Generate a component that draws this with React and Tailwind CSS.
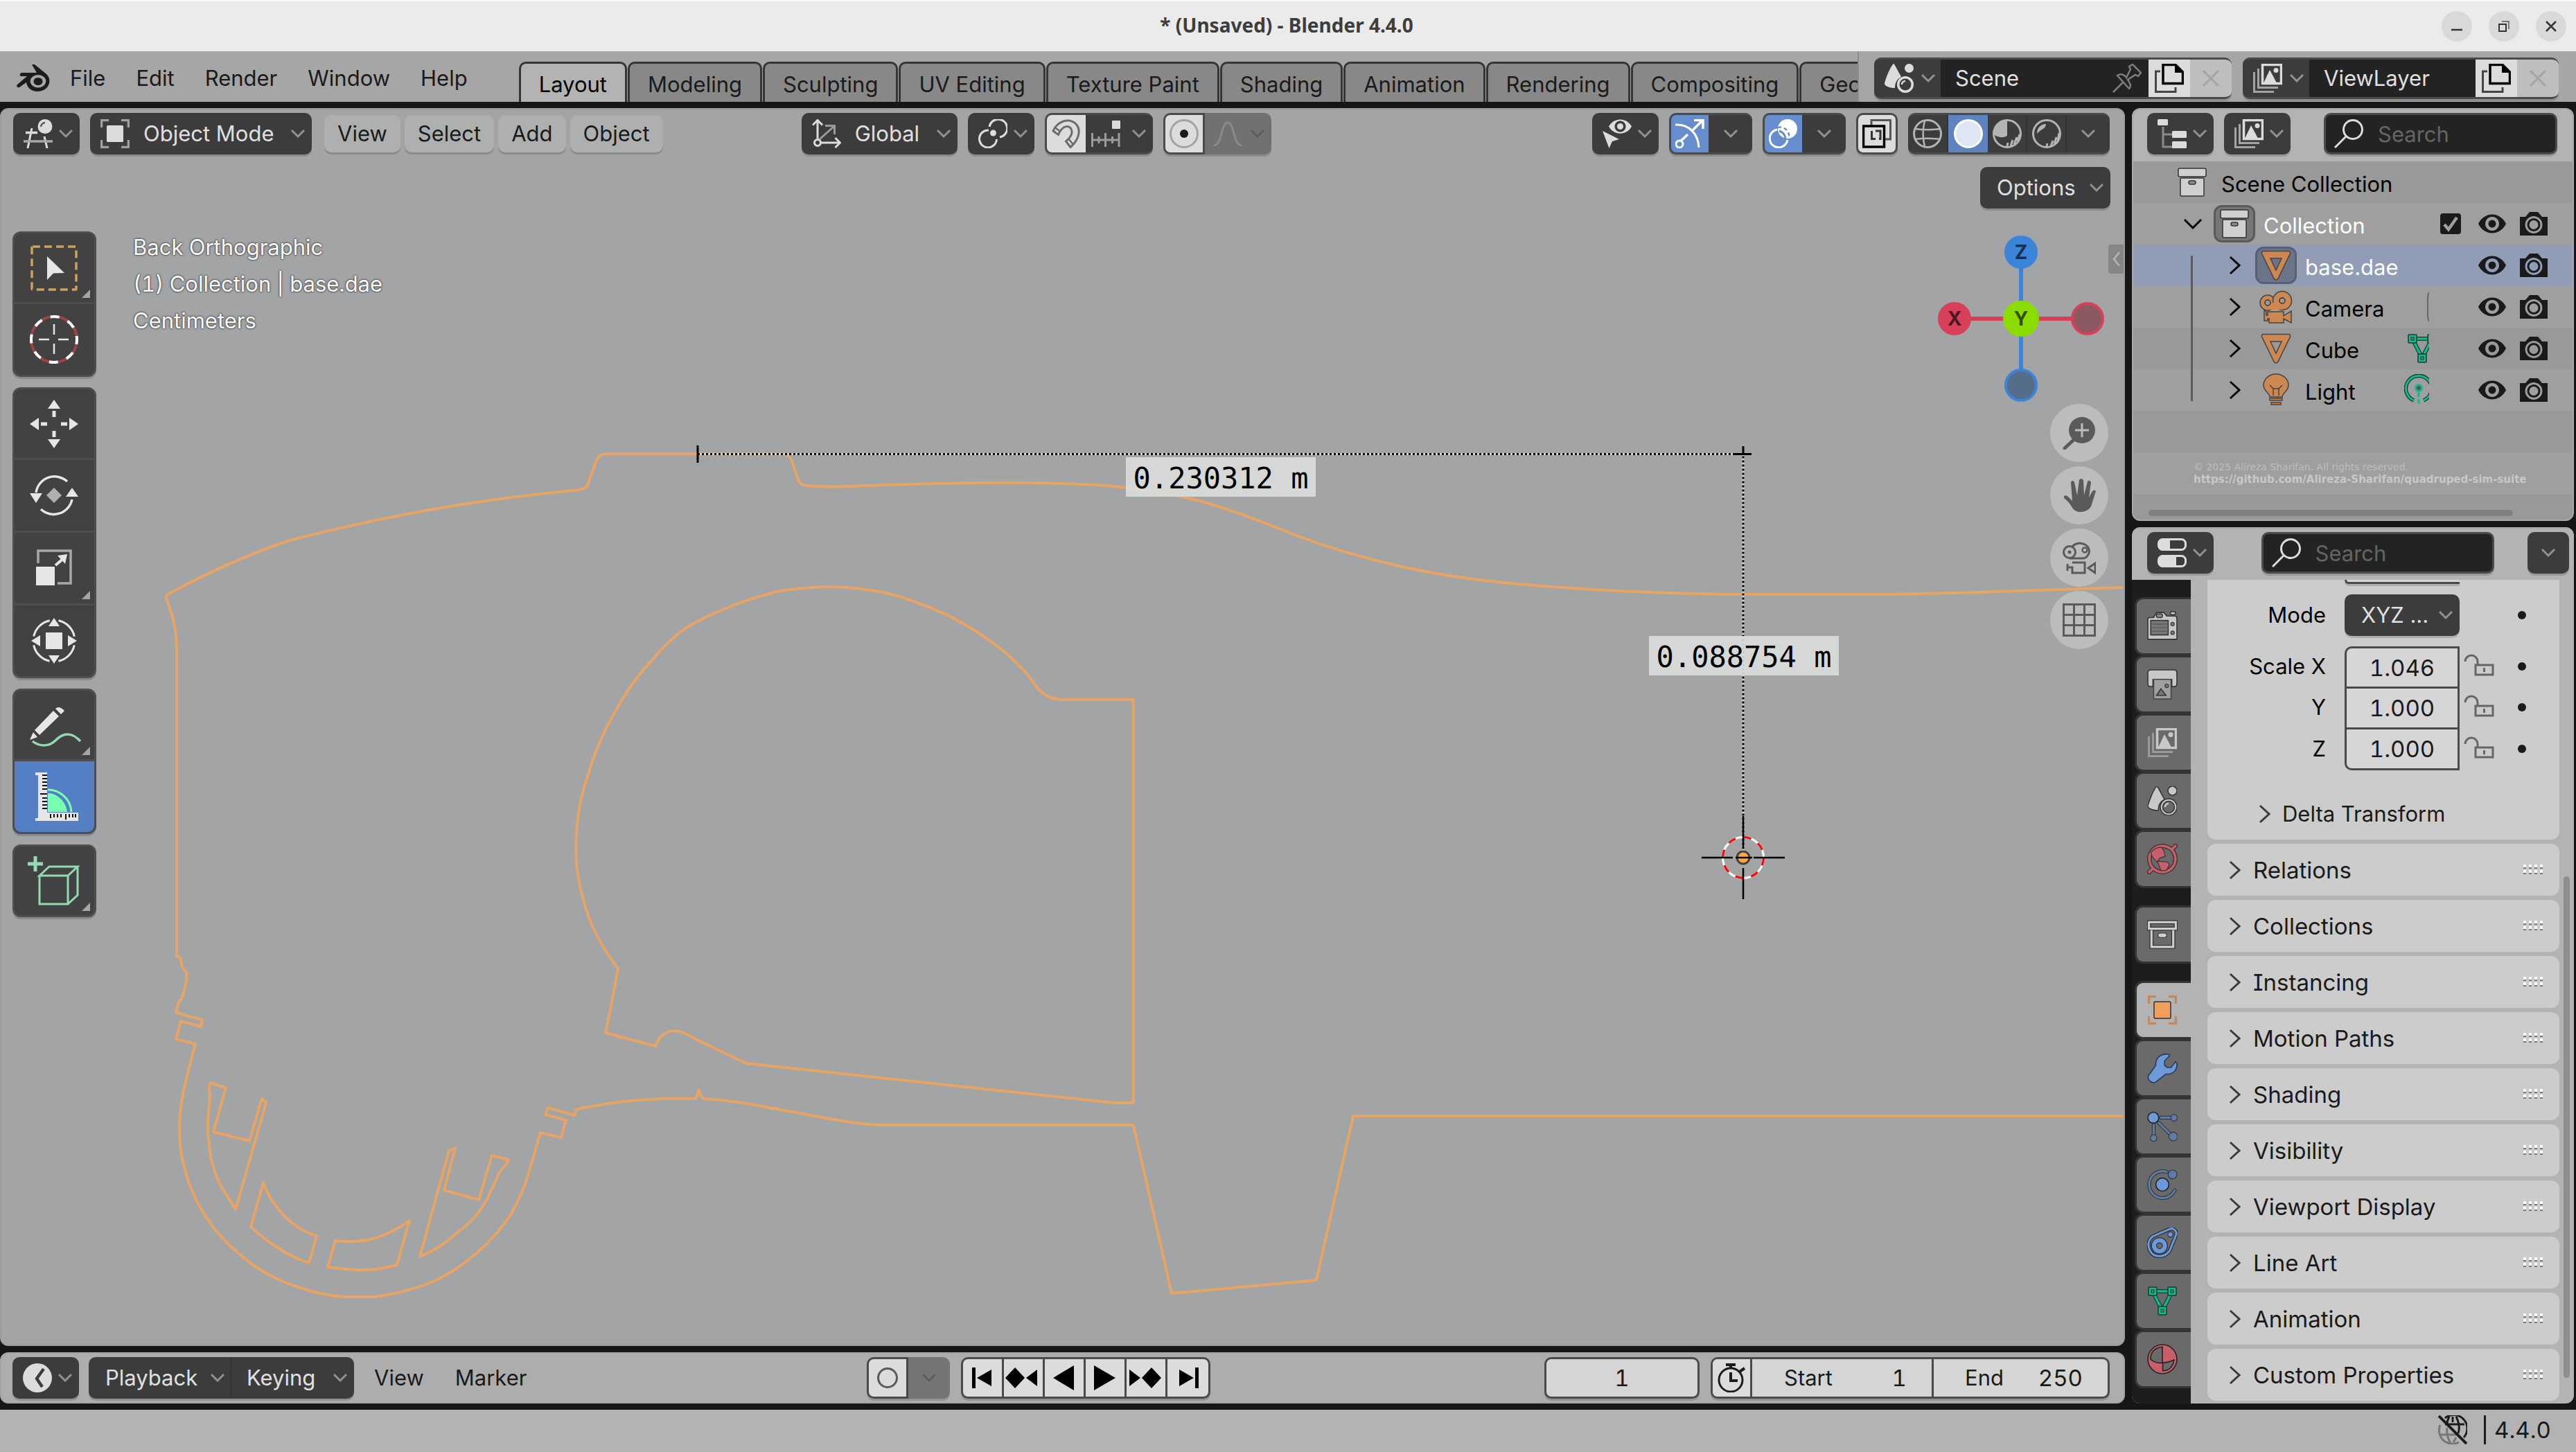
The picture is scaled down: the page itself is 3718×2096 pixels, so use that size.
import React from "react";

const L = "#dcdcdc";

/* ---------- small drawing helpers ---------- */

function Ico({ s = 42, w, h, vb = "0 0 42 42", className = "", children }) {
  return (
    <svg width={w || s} height={h || s} viewBox={vb} fill="none" aria-hidden="true" className={"block shrink-0 " + className}>
      {children}
    </svg>
  );
}

function Chevron({ color = "#929292" }) {
  return (
    <Ico w={20} h={14} vb="0 0 20 14">
      <path d="M1 2 L10 11 L19 2" stroke={color} strokeWidth="3" />
    </Ico>
  );
}

function Right({ color = "#3c3c3c", w = 3 }) {
  return (
    <Ico w={17} h={28} vb="0 0 17 28">
      <path d="M2 2 L15 14 L2 26" stroke={color} strokeWidth={w} />
    </Ico>
  );
}

const BlenderLogo = () => (
  <Ico w={48} h={40} vb="0 0 48 40">
    <path
      fillRule="evenodd"
      fill="#1c1c1c"
      d="M23 2c-1.500-1.500 1-3.500 3-2L43 14c4 4 5 8 4 13-2 8-9 12-17 12-9 0-15-6-16-13L4 33c-3 1-5-2-3-4l14-12H7c-3 0-3-4 0-5h22zM31 15a11 9 0 1 0 0 18.500a11 9 0 1 0 0-18.500zM31 19a6.500 5.500 0 1 1 0 11a6.500 5.500 0 1 1 0-11z"
    />
  </Ico>
);

const View3d = () => (
  <Ico>
    <path d="M12 13 L6 42 M30 25 L34 42" stroke={L} strokeWidth="3" />
    <path d="M3 19.500 H20" stroke={L} strokeWidth="3.500" />
    <path d="M0 32 H42" stroke="#a8a8a8" strokeWidth="3.500" />
    <circle cx="31" cy="10.500" r="10.500" fill={L} />
    <path d="M25 11 a6.500 6.500 0 0 1 6-6" stroke="#555" strokeWidth="2.500" />
  </Ico>
);

const ObjectMode = ({ c = "#a0a0a0", f = L, line = "none" }) => (
  <Ico>
    <path d="M1.500 12 V1.500 H12 M30 1.500 H40.500 V12 M40.500 30 V40.500 H30 M12 40.500 H1.500 V30" stroke={c} strokeWidth="3.500" />
    <rect x="9" y="9" width="24" height="24" rx="1.500" fill={f} stroke={line} strokeWidth="1.500" />
  </Ico>
);

const Axes = () => (
  <Ico>
    <path d="M11 29 L31 11 M19 9.500 H32.500 V22" stroke="#9a9a9a" strokeWidth="3" />
    <path d="M8 2 V28 M1 8.500 L8 1.500 L15 8.500 M13 34 H40 M33.500 27 L40.500 34 L33.500 41" stroke={L} strokeWidth="3" />
    <circle cx="8" cy="34" r="4.500" stroke={L} strokeWidth="3" />
  </Ico>
);

const Pivot = () => (
  <Ico>
    <path d="M16 11 A13 13 0 1 1 31 26" stroke={L} strokeWidth="3" />
    <path d="M15 16 A12.500 12.500 0 1 0 26.500 29" stroke={L} strokeWidth="3" />
    <circle cx="21.500" cy="20" r="4.500" fill={L} />
  </Ico>
);

const Magnet = () => (
  <Ico>
    <path d="M2 17 C8 3 25 -3 35 7 C43 16 39 30 27 40.500 L20.500 32 C30 24 31 17 26.500 12 C21 8 14 12 9.500 22.500 Z" stroke="#6c6c6c" strokeWidth="3" />
    <path d="M4.500 12 L12.500 18 M24 28 L30.500 36" stroke="#6c6c6c" strokeWidth="2.500" />
  </Ico>
);

const Increment = () => (
  <Ico>
    <rect x="30" y="2" width="12" height="12" rx="1" fill={L} />
    <path d="M1.500 20 V40 M40 20 V40 M20.500 20 V40" stroke="#9c9c9c" strokeWidth="3" />
    <path d="M1 30 H41 M11 25 V35 M30.500 25 V35" stroke="#9c9c9c" strokeWidth="3" />
  </Ico>
);

const Proportional = () => (
  <Ico>
    <circle cx="21" cy="21" r="19.500" stroke="#a2a2a2" strokeWidth="3" />
    <circle cx="21" cy="21" r="6" fill="#1a1a1a" />
  </Ico>
);

const Falloff = () => (
  <Ico>
    <path d="M1 38 C14 36 11 5 21 5 C31 5 28 36 41 38" stroke="#8a8a8a" strokeWidth="3" />
  </Ico>
);

const EyeCursor = () => (
  <Ico>
    <path fillRule="evenodd" fill={L} d="M9 10.500 C16 -3 35 -3 42 10.500 C35 24 16 24 9 10.500 Z M25.500 2.500 a8 8 0 1 0 .01 0z" />
    <circle cx="25.500" cy="10.500" r="4.500" fill={L} />
    <path d="M0 17 L24 29 L14 32 L9.500 42 Z" fill={L} />
  </Ico>
);

const GizmoIcon = () => (
  <Ico>
    <path d="M0 8 C20 7 33 21 34 41" stroke="#fff" strokeWidth="3" />
    <path d="M8.500 31 L18 22 M24 17 L38 3 M27 1.500 H40 V14" stroke="#fff" strokeWidth="3.500" />
    <circle cx="6" cy="36" r="5" stroke="#fff" strokeWidth="3" />
  </Ico>
);

const Overlay = () => (
  <Ico>
    <circle cx="27" cy="14" r="14" fill="#fff" />
    <path d="M12 15 A13 13 0 1 0 27 30" stroke="#fff" strokeWidth="3" />
    <path d="M15 17 A13 13 0 0 1 24 28" stroke="#668dcd" strokeWidth="3" />
    <path d="M13 12 A13 13 0 0 1 28 30" stroke="#668dcd" strokeWidth="2.500" strokeDasharray="5 4" />
  </Ico>
);

const Xray = () => (
  <Ico>
    <path d="M13 9 V1.500 H40.500 V29 H33" stroke="#555" strokeWidth="3" />
    <rect x="1.500" y="10" width="30" height="30" stroke="#000" strokeWidth="3.500" />
    <path d="M13.500 17 V28.500 H19 M24 28.500 H26 V17 H19" stroke="#333" strokeWidth="3" />
  </Ico>
);

const Wire = () => (
  <Ico>
    <circle cx="21" cy="21" r="19.500" stroke="#b4b4b4" strokeWidth="3" />
    <path d="M3 14 C14 15.500 28 15.500 39 14 M3 29 C14 27.500 28 27.500 39 29 M17 2 C14 14 14 28 17 40" stroke="#b4b4b4" strokeWidth="2.500" />
  </Ico>
);

const Solid = () => (
  <Ico>
    <circle cx="21" cy="21" r="19.500" fill="#dfe6f3" stroke="#fff" strokeWidth="3" />
  </Ico>
);

const MaterialShade = () => (
  <Ico>
    <circle cx="21" cy="21" r="19.500" stroke="#b4b4b4" strokeWidth="3" />
    <path d="M21 2 V24 C14 28 6 26 2 22 A19 19 0 0 1 21 2Z" fill="#b4b4b4" />
    <path d="M21 39 L22 34 M26 39 L29 30 M31 36 L35 26 M36 32 L39 22" stroke="#b4b4b4" strokeWidth="3" />
  </Ico>
);

const Rendered = () => (
  <Ico>
    <circle cx="21" cy="21" r="19.500" stroke="#b4b4b4" strokeWidth="3" />
    <path d="M7 21 C7 12 13 7 20 7 C20 14 13 14 7 21Z" fill="#b4b4b4" />
    <path d="M21 39 L22 35 M27 39 L30 31 M32 36 L35 26 M37 31 L39 20" stroke="#b4b4b4" strokeWidth="3" />
  </Ico>
);

const SceneIcon = ({ c = L, bg = "#3c3c3c", line = "none" }) => (
  <Ico>
    <path d="M13 0 C14 0 15 2 23 17 L24 19 C18 22 15 27 15 35 C9 35 1 33 0 29 C0 26 8 4 13 0Z" fill={c} stroke={line} strokeWidth="1.500" />
    <circle cx="35.500" cy="6.500" r="6.500" fill={c} stroke={line} strokeWidth="1.500" />
    <circle cx="30" cy="30" r="12" fill={c} stroke={line} strokeWidth="1.500" />
    <circle cx="30" cy="30" r="8.500" fill={bg} stroke={line} strokeWidth="1.500" />
    <path d="M25 30 a5 5 0 0 1 5-5" stroke={c} strokeWidth="2.500" />
  </Ico>
);

const Layers = ({ c = L, d = "#a4a4a4", bg = "#3c3c3c" }) => (
  <Ico>
    <path d="M1.500 12 V40.500 H30 M7.500 7 V34.500 H36" stroke={d} strokeWidth="3" />
    <rect x="13.500" y="1.500" width="27" height="27" fill={bg} stroke={c} strokeWidth="3.500" />
    <path d="M15 28 L24 9 L30 20 L34 28Z" fill={c} />
    <circle cx="33" cy="9.500" r="3.500" fill={c} />
  </Ico>
);

const Copy = () => (
  <Ico>
    <path d="M8 11 H1.500 V40.500 H30 V34" stroke="#444" strokeWidth="3" />
    <path d="M12 1.500 H30 L40.500 12 V28.500 H12 Z" stroke="#000" strokeWidth="3.500" />
    <path d="M29 0 L42 13 H29Z" fill="#000" />
  </Ico>
);

const Cross = () => (
  <Ico s={26} vb="0 0 26 26">
    <path d="M2 2 L24 24 M24 2 L2 24" stroke="#a4a4a4" strokeWidth="3" />
  </Ico>
);

const Pin = () => (
  <Ico>
    <path d="M1 41 L15 27 M7 17 C13 13 18 17 20 20 L26 8 L24 4 L29 1 L41 13 L37 18 L33 16 L22 23 C25 28 28 32 24 36 Z" stroke="#7c7c7c" strokeWidth="2.500" />
  </Ico>
);

const Tree = () => (
  <Ico>
    <path d="M8 11 V40 H22 M8 22 H22" stroke="#8a8a8a" strokeWidth="3" />
    <rect x="0" y="0" width="15" height="9" rx="1.500" fill={L} />
    <rect x="21" y="17" width="21" height="10" rx="1.500" fill={L} />
    <rect x="21" y="32" width="21" height="10" rx="1.500" fill={L} />
  </Ico>
);

const SearchIcon = () => (
  <Ico>
    <circle cx="27" cy="15" r="13.500" stroke={L} strokeWidth="3" />
    <path d="M17 25 L1 41" stroke={L} strokeWidth="3" />
  </Ico>
);

const PropsIcon = () => (
  <Ico>
    <rect x="1.500" y="1.500" width="39" height="15" rx="6" stroke={L} strokeWidth="3" />
    <path d="M18 1 V17 H8 a7 7 0 0 1-7-7 V8 a7 7 0 0 1 7-7Z" fill={L} />
    <rect x="1.500" y="25.500" width="39" height="15" rx="6" stroke={L} strokeWidth="3" />
    <path d="M27 25 V41 H8 a7 7 0 0 1-7-7 V32 a7 7 0 0 1 7-7Z" fill={L} />
  </Ico>
);

const ClockIcon = () => (
  <Ico>
    <circle cx="21" cy="21" r="21" fill={L} />
    <path d="M30 8 L20 22 L28 34" stroke="#3c3c3c" strokeWidth="4.500" />
  </Ico>
);

const Stopwatch = () => (
  <Ico>
    <circle cx="20" cy="24" r="17" stroke="#1c1c1c" strokeWidth="3" />
    <path d="M13 2 H27 M20 2 V7 M33 12 L40 7 M20 13 V25 H30" stroke="#1c1c1c" strokeWidth="4" />
  </Ico>
);

const Box = ({ c = "#d0d0d0" }) => (
  <Ico>
    <rect x="1" y="1" width="40" height="12" rx="2" fill={c} stroke="#333" strokeWidth="1.500" />
    <rect x="4" y="15" width="34" height="26" rx="1.500" fill={c} stroke="#333" strokeWidth="1.500" />
    <rect x="16" y="19" width="10" height="5" rx="2.500" fill="#8c8c8c" stroke="#333" strokeWidth="1.500" />
  </Ico>
);

const MeshTri = () => (
  <Ico s={44} vb="0 0 44 44">
    <path fillRule="evenodd" d="M3 1.500 H41 Q43 2 42.500 5 L25 41 Q22 45 19 41 L1.500 5 Q1 2 3 1.500Z M14 12 L22 29 L30 12Z" fill="#cc8850" stroke="#444" strokeWidth="1.500" />
  </Ico>
);

const CameraObj = () => (
  <Ico w={48} h={48} vb="0 0 48 48">
    <path d="M7 27 V44 H12 V41 H14 V47 H35 V41 L46 47 V30 L35 37 V31 H12 V36 H10 V31Z" fill="#cc8850" stroke="#444" strokeWidth="1.500" />
    <circle cx="12" cy="18" r="11" fill="#cc8850" stroke="#444" strokeWidth="1.500" />
    <circle cx="33" cy="15" r="13.500" fill="#cc8850" stroke="#444" strokeWidth="1.500" />
    <path d="M12 18 H33 V28 H12Z" fill="#cc8850" />
    <circle cx="12" cy="18" r="4" fill="#9a9a9a" stroke="#333" strokeWidth="1.500" />
    <circle cx="33" cy="15" r="4" fill="#9a9a9a" stroke="#333" strokeWidth="1.500" />
  </Ico>
);

const LightObj = () => (
  <Ico w={44} h={48} vb="0 0 44 48">
    <path d="M22 1 C11 1 4 9 4 17 C4 26 13 28 13 34 H31 C31 28 40 26 40 17 C40 9 33 1 22 1Z" fill="#cc8850" stroke="#444" strokeWidth="1.500" />
    <path d="M13 17 L18 22 H26 L31 17 M18 22 V32 M26 22 V32" stroke="#444" strokeWidth="1.500" />
    <path d="M13 36 H31 V39 H13Z M15 42 H29 V45 H15Z" fill="#cc8850" stroke="#444" strokeWidth="1.500" />
  </Ico>
);

const MeshData = () => (
  <Ico>
    <path d="M7 7 H35 L21 35Z" stroke="#1c3a30" strokeWidth="6" />
    <path d="M7 7 H35 L21 35Z" stroke="#0fb98a" strokeWidth="3.500" />
    {[[1, 1], [29, 1], [15, 29]].map(([x, y]) => (
      <g key={x}>
        <rect x={x} y={y} width="12" height="12" rx="1" fill="#0fb98a" stroke="#1c3a30" strokeWidth="1.500" />
        <rect x={x + 4} y={y + 4} width="4" height="4" fill="#777" stroke="#1c3a30" strokeWidth="1" />
      </g>
    ))}
  </Ico>
);

const LightData = () => (
  <Ico w={42} h={46} vb="0 0 42 46">
    <path d="M14 38 A18.500 18.500 0 1 1 28 38" stroke="#1c3a30" strokeWidth="5.500" />
    <path d="M14 38 A18.500 18.500 0 1 1 28 38" stroke="#0fb98a" strokeWidth="3" />
    <circle cx="21" cy="20" r="4.500" fill="#555" stroke="#0fb98a" strokeWidth="3" />
    <path d="M21 26 V46" stroke="#0fb98a" strokeWidth="3" strokeDasharray="7 3" />
  </Ico>
);

const Eye = () => (
  <Ico w={40} h={28} vb="0 0 40 28">
    <path fillRule="evenodd" fill="#1a1a1a" d="M0 14 C9 -4 31 -4 40 14 C31 32 9 32 0 14Z M20 4 a10 10 0 1 0 .01 0z" />
    <circle cx="20" cy="14" r="5.500" fill="#1a1a1a" />
  </Ico>
);

const Cam = () => (
  <Ico w={40} h={34} vb="0 0 40 34">
    <path fillRule="evenodd" fill="#1a1a1a" d="M0 7 H8 L14 0 H26 L32 7 H40 V34 H0Z M20 6 a12.500 12.500 0 1 0 .01 0z" />
    <circle cx="20" cy="18.500" r="8" stroke="#1a1a1a" strokeWidth="3" />
  </Ico>
);

const Lock = () => (
  <Ico w={44} h={34} vb="0 0 44 34">
    <path d="M2 12 a9 9 0 0 1 18 0 V17" stroke="#666" strokeWidth="3" />
    <rect x="17" y="17" width="25" height="14" stroke="#666" strokeWidth="3" />
    <rect x="28" y="21" width="3" height="6" fill="#666" />
  </Ico>
);

const Grip = () => (
  <Ico w={30} h={16} vb="0 0 30 16">
    {[0, 8, 16, 24].map((x) => (
      <g key={x}>
        <rect x={x} y="0" width="4" height="4" fill="#fff" />
        <rect x={x} y="4" width="4" height="2" fill="#777" />
        <rect x={x} y="8" width="4" height="4" fill="#fff" />
        <rect x={x} y="12" width="4" height="2" fill="#777" />
      </g>
    ))}
  </Ico>
);

/* ---------- properties tab icons ---------- */

const TabRender = () => (
  <Ico s={44}>
    <path d="M2 9 H9 L13 2 H23 L27 7 H38 Q41 7 41 10 V39 H1 V11Z" fill="#c8c8c8" stroke="#333" strokeWidth="1.500" />
    <rect x="32" y="1" width="7" height="4" rx="1.500" fill="#c8c8c8" stroke="#333" strokeWidth="1.500" />
    <rect x="13" y="4" width="8" height="5" rx="1.500" fill="#888" stroke="#333" strokeWidth="1.500" />
    <rect x="5" y="13" width="24" height="20" fill="#777" stroke="#333" strokeWidth="1.500" />
    <path d="M7 18 H27 M7 23 H27 M7 28 H27" stroke="#555" strokeWidth="1" />
    <circle cx="35" cy="18" r="2.500" fill="#777" stroke="#333" />
    <circle cx="35" cy="30" r="2.500" fill="#777" stroke="#333" />
  </Ico>
);
const TabOutput = () => (
  <Ico s={44}>
    <path d="M5 1 H37 Q41 1 41 5 V20 Q41 24 37 24 H34 V14 H8 V24 H5 Q1 24 1 20 V5 Q1 1 5 1Z" fill="#c8c8c8" stroke="#333" strokeWidth="1.500" />
    <rect x="9" y="14" width="24" height="27" fill="#a0a0a0" stroke="#444" strokeWidth="1.500" />
    <path d="M13 36 L19 27 L26 36Z" fill="#777" stroke="#333" strokeWidth="1.500" />
    <circle cx="27" cy="23" r="2.500" fill="#777" stroke="#333" />
  </Ico>
);
const TabWorld = () => (
  <Ico s={44}>
    <circle cx="21" cy="21" r="18" stroke="#333" strokeWidth="6" />
    <path d="M1 41 L8 34 M34 8 L41 1" stroke="#333" strokeWidth="6" />
    <circle cx="21" cy="21" r="18" stroke="#c75f68" strokeWidth="3.500" />
    <path d="M2 40 L8 34 M34 8 L40 2" stroke="#c75f68" strokeWidth="3.500" />
    <path d="M5 12 Q12 4 20 5 L23 10 L25 17 L17 20 L14 26 L7 18Z M14 24 L28 25 L31 29 L26 37 H19 L16 29Z" fill="#c75f68" stroke="#333" strokeWidth="1" />
  </Ico>
);
const TabCollection = () => (
  <Ico s={44}>
    <rect x="2.500" y="4" width="37" height="9" stroke="#333" strokeWidth="5.500" />
    <path d="M6 14 V38 H36 V14" stroke="#333" strokeWidth="5.500" />
    <rect x="2.500" y="4" width="37" height="9" stroke="#d0d0d0" strokeWidth="3" />
    <path d="M6 15 V38 H36 V15" stroke="#d0d0d0" strokeWidth="3" />
    <rect x="15" y="19" width="12" height="6" rx="3" fill="#d0d0d0" stroke="#333" />
  </Ico>
);
const TabModifier = () => (
  <Ico s={44}>
    <path d="M12 17 C11 6 20 0 30 2 L31 4 L24 11 V17 L28 20 L33 20 L39 12 L41 14 C42 25 34 30 26 29 L12 40 C7 43 -1 37 2 31Z" fill="#6b99da" stroke="#2c3a4e" strokeWidth="1.500" />
  </Ico>
);
const TabParticles = () => (
  <Ico s={44}>
    <path d="M19 9 H34 M9 19 V34 M16 16 L34 34" stroke="#333" strokeWidth="5" strokeLinecap="round" />
    <path d="M19 9 H34 M9 19 V34 M16 16 L34 34" stroke="#5e7ca8" strokeWidth="3" strokeLinecap="round" />
    <circle cx="37" cy="9" r="4.500" fill="#5e7ca8" stroke="#333" />
    <circle cx="9" cy="37" r="4.500" fill="#5e7ca8" stroke="#333" />
    <circle cx="36" cy="35" r="6" fill="#5e7ca8" stroke="#333" />
    <circle cx="8.500" cy="9" r="7.500" fill="#6b99da" stroke="#222" strokeWidth="1.500" />
  </Ico>
);
const TabPhysics = () => (
  <Ico s={44}>
    <path d="M27 3.500 A18.500 18.500 0 1 0 38 29" stroke="#333" strokeWidth="5" strokeLinecap="round" />
    <path d="M27 3.500 A18.500 18.500 0 1 0 38 29" stroke="#5e7ca8" strokeWidth="3" strokeLinecap="round" />
    <circle cx="35" cy="7" r="6" fill="#5e7ca8" stroke="#333" />
    <circle cx="21" cy="21" r="9" fill="#6b99da" stroke="#222" strokeWidth="1.500" />
  </Ico>
);
const TabConstraint = () => (
  <Ico s={44}>
    <path d="M8 12 L31 2 C37 0 41 5 40 10 L31 32 C24 42 9 42 4 32 C0 24 2 16 8 12Z" stroke="#222" strokeWidth="5" />
    <path d="M8 12 L31 2 C37 0 41 5 40 10 L31 32 C24 42 9 42 4 32 C0 24 2 16 8 12Z" stroke="#6b99da" strokeWidth="3" />
    <circle cx="17" cy="25" r="7.500" stroke="#222" strokeWidth="8" />
    <circle cx="17" cy="25" r="7.500" stroke="#6b99da" strokeWidth="6" />
    <circle cx="32" cy="9.500" r="3.500" fill="#6b99da" stroke="#222" />
  </Ico>
);
const TabMaterial = () => (
  <Ico s={44}>
    <circle cx="21" cy="21" r="20" fill="#c75f68" stroke="#222" strokeWidth="1.500" />
    <path d="M21 4 V26 C14 27 8 24 4.500 21 C5 11 11 5 21 4Z" fill="#6a6a6a" stroke="#222" strokeWidth="1.500" />
    <path d="M21.500 26 C28 26 33 24 37 22 C36 31 30 37 21.500 37Z" fill="#6a6a6a" stroke="#222" strokeWidth="1.500" />
  </Ico>
);

/* ---------- tool icons ---------- */

const TI = ({ children }) => <Ico s={70} vb="0 0 70 70" className="overflow-visible">{children}</Ico>;
const W = "#e6e6e6";
const tools = {
  select: (
    <TI>
      <rect x="3" y="4" width="64" height="62" rx="1" stroke="#c9a25e" strokeWidth="3.500" strokeDasharray="11 6" />
      <path d="M25 18 L50 42 L34 42.500 L25 52Z" fill={W} />
    </TI>
  ),
  cursor: (
    <TI>
      <circle cx="35" cy="35" r="33" stroke="#9c4545" strokeWidth="4" />
      <circle cx="35" cy="35" r="33" stroke="#fff" strokeWidth="4" strokeDasharray="13 13" strokeDashoffset="6" />
      <path d="M35 13 V28 M35 41 V56 M13 35 H28 M41 35 H56" stroke={W} strokeWidth="2.500" />
    </TI>
  ),
  move: (
    <TI>
      <path d="M35 0 L44 13 H26Z M35 70 L44 57 H26Z M0 35 L13 26 V44Z M70 35 L57 26 V44Z" fill={W} />
      <path d="M35 16 V25 M35 45 V54 M16 35 H25 M45 35 H54" stroke={W} strokeWidth="5" />
    </TI>
  ),
  rotate: (
    <TI>
      <path d="M9 31 A27 27 0 0 1 54 15 M61 41 A27 27 0 0 1 16 55" stroke={W} strokeWidth="3.500" />
      <path d="M0 32 H18 L9 46Z M52 37 H70 L61 24Z" fill={W} />
      <path d="M35 24 L46 35 L35 46 L24 35Z" fill="#b0b0b0" />
    </TI>
  ),
  scale: (
    <TI>
      <path d="M12 28 V10 H59 V57 H40" stroke="#a8a8a8" strokeWidth="3.500" />
      <rect x="9" y="33" width="27" height="27" fill={W} />
      <path d="M37 31 L50 20" stroke={W} strokeWidth="4" />
      <path d="M40 17 L54 15 L51 29Z" fill={W} />
    </TI>
  ),
  transform: (
    <TI>
      <circle cx="35" cy="35" r="30" stroke={W} strokeWidth="3" strokeDasharray="34.100 13" strokeDashoffset="-6.500" />
      <path d="M35 2 L43 14 H27Z M35 68 L43 56 H27Z M2 35 L15 27 V43Z M68 35 L55 27 V43Z" fill={W} />
      <rect x="23" y="23" width="24" height="24" fill={W} />
    </TI>
  ),
  annotate: (
    <TI>
      <path d="M4 58 C14 66 28 66 37 57 C50 44 62 46 73 58" stroke="#93d9b1" strokeWidth="3.500" />
      <path d="M7 42 L34 14 L42 22 L14 49Z M37 11 Q42 6 50 14 L45 19Z M5 45 L11 52 L0 56Z" fill={W} />
    </TI>
  ),
  measure: (
    <TI>
      <path d="M8 0 H25 V58 H70 V70 H8 V66 H12 V4 H8Z" fill={W} />
      <path d="M18 4 H25 M18 9 H25 M18 14 H25 M18 19 H25 M18 24 H25 M15 31 H25 M18 37 H25 M18 42 H25 M18 47 H25 M18 52 H25 M30 60 V66 M35 60 V65 M40 60 V65 M45 60 V65 M52 60 V68 M57 60 V65 M62 60 V65 M66 60 V65" stroke="#111" strokeWidth="2" />
      <path d="M26 57 V30 C40 30 52 42 54 57Z" fill="#79ffb0" />
      <path d="M26 25 C43 25 59 38 60 57" stroke="#79ffb0" strokeWidth="3" />
    </TI>
  ),
  cube: (
    <TI>
      <path d="M14 27 L28 14 H69 L55 27Z M14 27 V68 H55 V27 M69 14 V55 L55 68" stroke="#93d9b1" strokeWidth="3" />
      <path d="M8 -1 V21 M-3 10 H19" stroke="#93d9b1" strokeWidth="5" />
    </TI>
  ),
};

/* ---------- shared controls ---------- */

const shadow = "shadow-[0_3px_0_rgba(0,0,0,0.15)]";

function IconDrop({ icon, label, className = "" }) {
  return (
    <button aria-label={label} aria-haspopup="menu" className={"flex h-[60px] w-24 shrink-0 items-center justify-between rounded-[10px] bg-[#3c3c3c] pr-2.5 pl-[15px] " + shadow + " " + className}>
      {icon}
      <Chevron />
    </button>
  );
}

function DropSelect({ label, value, icon, className = "", textClass = "" }) {
  return (
    <label className={"grid h-[60px] shrink-0 items-center rounded-[10px] bg-[#3c3c3c] text-[#e0e0e0] " + shadow + " " + className}>
      {icon && <span className="pointer-events-none col-start-1 row-start-1 pl-[15px]">{icon}</span>}
      <select aria-label={label} className={"col-start-1 row-start-1 h-full w-full appearance-none bg-transparent outline-none " + textClass}>
        <option>{value}</option>
      </select>
      <span className="pointer-events-none col-start-1 row-start-1 justify-self-end pr-2.5">
        <Chevron />
      </span>
    </label>
  );
}

const MenuBtn = ({ children }) => (
  <button className={"h-[54px] rounded-[10px] bg-[#aeb0b0] px-[19px] text-[#1a1a1a] " + shadow}>{children}</button>
);

function SearchBox({ label, className = "" }) {
  return (
    <label className={"flex h-[60px] items-center gap-[21px] rounded-[10px] border-[3px] border-[#4a4a4a] bg-[#232323] pl-3 " + shadow + " " + className}>
      <SearchIcon />
      <input type="search" aria-label={label} placeholder="Search" className="h-full w-full min-w-0 bg-transparent text-white outline-none placeholder:text-[#656565] placeholder:opacity-100" />
    </label>
  );
}

function IdBlock({ icon, label, value, fieldClass, pin }) {
  return (
    <div className={"flex h-[60px] overflow-hidden rounded-[10px] border-y-[3px] border-[#4a4a4a] bg-[#3c3c3c] " + shadow}>
      <button aria-label={"Browse " + label} className="flex w-24 items-center justify-between pr-2 pl-[15px]">
        {icon}
        <Chevron />
      </button>
      <label className={"flex items-center bg-[#232323] pr-2.5 pl-[21px] text-[#e0e0e0] " + fieldClass}>
        <input aria-label={label} defaultValue={value} className="w-full min-w-0 bg-transparent outline-none" />
        {pin && <Pin />}
      </label>
      <button aria-label={"New " + label} className="flex w-[60px] items-center justify-center bg-[#dcdcdc]">
        <Copy />
      </button>
      <button aria-label={"Remove " + label} className="flex w-[60px] items-center justify-center bg-[#bebebe]">
        <Cross />
      </button>
    </div>
  );
}

/* ---------- window title and top bar ---------- */

function TitleBar() {
  const btn = "flex size-11 items-center justify-center rounded-full bg-[#d9d9d9]";
  return (
    <header className="grid h-[74px] shrink-0 grid-cols-[1fr_auto_1fr] items-center border-t-2 border-[#fafafa] bg-[#ebebeb] px-[14px]">
      <span />
      <h1 className="pr-1 pb-1 font-['Noto_Sans',sans-serif] text-[28px] leading-none font-bold text-[#3d3d3d]">* (Unsaved) - Blender 4.4.0</h1>
      <div className="flex gap-6 justify-self-end">
        <button aria-label="Minimize" className={btn}>
          <Ico s={16} vb="0 0 16 16"><path d="M0 13 H16" stroke="#333" strokeWidth="2.500" /></Ico>
        </button>
        <button aria-label="Restore" className={btn}>
          <Ico s={16} vb="0 0 16 16"><path d="M1 5 H11 V15 H1Z" stroke="#333" strokeWidth="2" /><path d="M5 1 H15 V12" stroke="#777" strokeWidth="2" /></Ico>
        </button>
        <button aria-label="Close" className={btn}>
          <Ico s={16} vb="0 0 16 16"><path d="M1 1 L15 15 M15 1 L1 15" stroke="#333" strokeWidth="2.500" /></Ico>
        </button>
      </div>
    </header>
  );
}

const workspaces = ["Layout", "Modeling", "Sculpting", "UV Editing", "Texture Paint", "Shading", "Animation", "Rendering", "Compositing", "Geometry Nodes"];

function TopBar() {
  return (
    <div className="flex h-[73px] shrink-0 bg-[#a6a6a6] text-[#1a1a1a]">
      <nav className="flex shrink-0 items-center gap-11 pt-1 pl-6">
        <span className="-mr-[15px]"><BlenderLogo /></span>
        {["File", "Edit", "Render", "Window", "Help"].map((m) => (
          <button key={m}>{m}</button>
        ))}
      </nav>
      <div role="tablist" className="ml-[74px] flex min-w-0 flex-1 items-end gap-px overflow-hidden">
        {workspaces.map((w, i) => (
          <button
            key={w}
            role="tab"
            aria-selected={i === 0}
            className={
              "h-[58px] shrink-0 rounded-t-[10px] border-x-[3px] border-t-[3px] border-[#353535] px-[26px] pt-1 whitespace-nowrap " +
              (i === 0 ? "bg-[#b3b3b3] text-black" : "bg-[#888888]")
            }
          >
            {w}
          </button>
        ))}
      </div>
      <div className="flex shrink-0 gap-4 border-l-2 border-[#8c8c8c] pt-[9px] pr-[25px] pl-[22px]">
        <IdBlock icon={<SceneIcon />} label="Scene" value="Scene" fieldClass="w-[300px]" pin />
        <IdBlock icon={<Layers />} label="View layer" value="ViewLayer" fieldClass="w-[240px]" />
      </div>
    </div>
  );
}

/* ---------- 3D viewport ---------- */

function ViewportHeader() {
  return (
    <div className="flex items-center pt-[7px] pr-[22px] pl-[19px]">
      <IconDrop icon={<View3d />} label="Editor type" />
      <DropSelect label="Object interaction mode" value="Object Mode" icon={<ObjectMode />} className="ml-[15px] w-80" textClass="pl-[77px]" />
      <div className="ml-[18px] flex gap-1.5">
        <MenuBtn>View</MenuBtn>
        <MenuBtn>Select</MenuBtn>
        <MenuBtn>Add</MenuBtn>
        <MenuBtn>Object</MenuBtn>
      </div>
      <div className="ml-[200px] flex gap-[15px]">
        <DropSelect label="Transform orientation" value="Global" icon={<Axes />} className="w-[225px]" textClass="pl-[77px]" />
        <IconDrop icon={<Pivot />} label="Pivot point" />
        <div className={"flex h-[60px] w-[156px] overflow-hidden rounded-[10px] border-y-[3px] border-l-[3px] border-[#4a4a4a] bg-[#3c3c3c] " + shadow}>
          <button aria-label="Snap" aria-pressed="true" className="flex w-14 items-center justify-center bg-[#dcdcdc]"><Magnet /></button>
          <button aria-label="Snapping" className="flex flex-1 items-center justify-between pr-2.5 pl-2"><Increment /><Chevron /></button>
        </div>
        <div className={"flex h-[60px] w-[156px] overflow-hidden rounded-[10px] bg-[#707172] " + shadow}>
          <button aria-label="Proportional editing" className="flex w-[60px] items-center justify-center rounded-l-[10px] border-[3px] border-[#4a4a4a] bg-[#dcdcdc]"><Proportional /></button>
          <button aria-label="Falloff" disabled className="flex flex-1 items-center justify-between pr-2.5 pl-3"><Falloff /><Chevron color="#5c5c5c" /></button>
        </div>
      </div>
      <div className="ml-auto flex gap-[15px]">
        <IconDrop icon={<EyeCursor />} label="Object visibility" />
        <div className={"flex h-[60px] w-[120px] overflow-hidden rounded-[10px] border-y-[3px] border-l-[3px] border-[#4a4a4a] bg-[#3c3c3c] " + shadow}>
          <button aria-label="Show gizmos" aria-pressed="true" className="flex w-[54px] items-center justify-center bg-[#668dcd]"><GizmoIcon /></button>
          <button aria-label="Gizmo options" className="flex flex-1 items-center justify-center"><Chevron /></button>
        </div>
        <div className={"flex h-[60px] w-[120px] overflow-hidden rounded-[10px] border-y-[3px] border-l-[3px] border-[#4a4a4a] bg-[#3c3c3c] " + shadow}>
          <button aria-label="Show overlays" aria-pressed="true" className="flex w-[54px] items-center justify-center bg-[#668dcd]"><Overlay /></button>
          <button aria-label="Overlay options" className="flex flex-1 items-center justify-center"><Chevron /></button>
        </div>
        <button aria-label="Toggle X-ray" className={"flex size-[60px] items-center justify-center rounded-[10px] border-[3px] border-[#4a4a4a] bg-[#dcdcdc] " + shadow}><Xray /></button>
        <div className={"flex h-[60px] overflow-hidden rounded-[10px] border-y-[3px] border-[#4a4a4a] bg-[#3c3c3c] " + shadow}>
          <button aria-label="Wireframe" className="flex w-[58px] items-center justify-center border-r-2 border-[#333]"><Wire /></button>
          <button aria-label="Solid" aria-pressed="true" className="flex w-[57px] items-center justify-center bg-[#5f83bf]"><Solid /></button>
          <button aria-label="Material preview" className="flex w-[57px] items-center justify-center border-r-2 border-[#333]"><MaterialShade /></button>
          <button aria-label="Rendered" className="flex w-[57px] items-center justify-center border-r-2 border-[#333]"><Rendered /></button>
          <button aria-label="Shading options" className="flex w-[62px] items-center justify-center"><Chevron /></button>
        </div>
      </div>
    </div>
  );
}

function ToolGroup({ items }) {
  const height = (i) => {
    if (items.length === 1) return "h-[99px] ";
    return i === 0 || i === items.length - 1 ? "h-[102px] " : "h-[105px] ";
  };
  return (
    <div className={"w-[121px] divide-y-[3px] divide-[#4e4e4e] overflow-hidden rounded-[12px] border-[3px] border-[#4e4e4e] bg-[#424242] " + shadow}>
      {items.map(([key, label, more, active], i) => (
        <button
          key={key}
          aria-label={label}
          aria-pressed={!!active}
          className={"relative flex w-full items-center justify-center pr-0.5 " + height(i) + (active ? "bg-[#557fc4]" : "")}
        >
          {tools[key]}
          {more && (
            <svg className="absolute right-1.5 bottom-1.5" width="12" height="12" viewBox="0 0 12 12" aria-hidden="true">
              <path d="M12 0 V12 H0Z" fill="#a6a6a6" />
            </svg>
          )}
        </button>
      ))}
    </div>
  );
}

function SceneDrawing() {
  return (
    <svg className="absolute inset-0 h-full w-full" fill="none" aria-hidden="true">
      <g transform="translate(0 -156)">
        <g stroke="#e8a465" strokeWidth="4" strokeLinejoin="round">
          <path d="M242 858 Q330 810 415 781 Q505 757 620 736 Q700 722 780 713 L836 707 Q845 706 848 700 L860 667 Q864 655 875 655 H1130 Q1140 656 1143 666 L1152 693 Q1155 700 1165 701 Q1200 704 1247 701 Q1330 698 1412 697 Q1532 696 1608 702 Q1668 708 1728 722 Q1780 736 1871 773 Q1940 799 2015 816 Q2070 829 2134 837 Q2200 845 2300 851 Q2400 857 2516 858 H2700 Q2800 857 2882 854 L3067 848" />
          <path d="M242 858 Q238 860 241 866 L246 881 Q255 906 255 939 V1380 L261 1384 V1389 L263 1396 L269 1404 V1415 L266 1430 L262 1442 L259 1444 L254 1462 L292 1472 L290 1482 L261 1474 L254 1500 L282 1507 L270 1553 Q259 1594 259 1630 Q259 1652 263 1672 Q267 1689 272 1706 Q279 1724 287 1740 Q297 1757 309 1773 Q321 1788 335 1801 Q349 1814 365 1826 Q381 1837 398 1845 Q416 1854 437 1860 Q466 1870 497 1872 H540 Q562 1869 583 1864 Q602 1859 620 1852 Q639 1844 656 1833 Q673 1822 688 1809 Q703 1796 717 1780 Q729 1766 738 1752 Q747 1735 755 1717 Q762 1698 767 1680 L780 1635 L810 1642 L817 1617 L787 1609 L791 1599 L829 1610 L832 1601 Q884 1591 923 1588 Q964 1585 1004 1586 L1009 1573 Q1011 1584 1016 1586 Q1060 1589 1100 1597 L1171 1610 Q1230 1622 1269 1624 H1636 L1691 1867 L1900 1848 L1953 1611 H3067" />
          <path d="M1636 1010 H1535 Q1520 1010 1510 1004 Q1502 999 1495 990 L1480 970 Q1466 955 1450 941 Q1425 921 1397 904 Q1363 884 1329 872 Q1295 858 1262 853 Q1228 847 1194 847 Q1160 848 1126 853 Q1091 861 1058 874 Q1026 886 994 904 Q981 912 972 921 Q956 935 942 952 Q923 972 908 994 Q889 1023 874 1053 Q858 1086 848 1121 Q837 1153 834 1181 Q831 1205 831 1229 Q832 1257 838 1283 Q844 1311 855 1337 Q869 1368 892 1398 L882 1452 L874 1491 L946 1510 L952 1498 Q965 1485 980 1489 Q988 1490 1006 1501 L1077 1535 L1608 1592 H1636Z" />
          <path d="M303 1563 L326 1570 L308 1634 L360 1647 L378 1585 L384 1592 L340 1746 L322 1717 Q313 1702 309 1688 Q303 1670 302 1652 Q299 1634 300 1616 L303 1585 L302 1571Z" />
          <path d="M380 1707 Q385 1722 395 1737 Q403 1747 412 1757 Q422 1766 432 1773 Q444 1780 457 1784 L446 1823 Q428 1817 412 1808 Q399 1800 387 1792 Q373 1781 362 1771Z" />
          <path d="M484 1791 Q500 1793 513 1792 Q527 1791 539 1788 Q555 1783 567 1777 Q580 1770 591 1762 L573 1826 Q558 1830 543 1832 Q528 1834 513 1833 Q492 1832 473 1829Z" />
          <path d="M657 1657 L641 1718 L691 1732 L710 1668 L734 1674 L731 1680 L721 1692 L705 1727 Q697 1743 685 1757 Q673 1770 659 1780 Q648 1790 635 1799 Q621 1808 606 1814 L648 1661Z" />
        </g>
        {/* ruler */}
        <path d="M1007 655.500 H2516 V1238" stroke="#e6e6e6" strokeWidth="3" opacity="0.75" />
        <path d="M1007 655.500 H2516 V1238" stroke="#000" strokeWidth="3" strokeDasharray="3 3" />
        <path d="M1007 643 V668 M2516 644 V656 M2504 655.500 H2528" stroke="#000" strokeWidth="3" />
        {/* 3D cursor and origin */}
        <circle cx="2516" cy="1238" r="9" fill="#ffa63e" stroke="#424242" strokeWidth="3" />
        <circle cx="2516" cy="1238" r="29.500" stroke="#fff" strokeWidth="3" />
        <circle cx="2516" cy="1238" r="29.500" stroke="#f00" strokeWidth="3" strokeDasharray="11.580 11.580" />
        <path d="M2456 1238 H2501 M2505 1238 H2529 M2531 1238 H2576 M2516 1178 V1223 M2516 1253 V1298" stroke="#000" strokeWidth="2.500" />
      </g>
    </svg>
  );
}

function NavGizmo() {
  return (
    <svg width="250" height="250" viewBox="0 0 250 250" aria-label="Navigation gizmo" className="block text-[28px] font-bold">
      <path d="M125 29 V221" stroke="#3a85d9" strokeWidth="6" />
      <path d="M29 125 H221" stroke="#d8405a" strokeWidth="6" />
      <circle cx="125" cy="221" r="22" fill="#566d8a" stroke="#3a85d9" strokeWidth="4" />
      <circle cx="221" cy="125" r="22" fill="#8a5a60" stroke="#d8405a" strokeWidth="4" />
      <circle cx="125" cy="29" r="24" fill="#3a85d9" />
      <circle cx="29" cy="125" r="24" fill="#d8405a" />
      <circle cx="125" cy="125" r="26" fill="#8bdc00" />
      <text x="125" y="39" textAnchor="middle" fill="#16304e">Z</text>
      <text x="29" y="135" textAnchor="middle" fill="#4e1720">X</text>
      <text x="125" y="135" textAnchor="middle" fill="#325000">Y</text>
    </svg>
  );
}

const navButtons = [
  ["Zoom", <Ico s={48} vb="0 0 48 48" key="z"><circle cx="28" cy="20" r="19" fill="#5a5a5a" /><path d="M17 33 L3 46" stroke="#5a5a5a" strokeWidth="5" strokeLinecap="round" /><path d="M28 10 V30 M18 20 H38" stroke="#bbbdbc" strokeWidth="3" /></Ico>],
  ["Pan", <Ico s={48} vb="0 0 48 48" key="p"><path d="M2 25 Q5 23 8 26 L14 32 L12 5 Q14 1 17 5 L21 24 L24 2 Q27 -2 30 2 L31 24 L36 4 Q39 1 41 5 L38 27 L43 18 Q46 15 48 18 L41 40 Q36 48 26 48 Q18 48 14 42 Q9 33 2 28Z" fill="#5a5a5a" /></Ico>],
  ["Camera view", <Ico s={48} vb="0 0 48 48" key="c"><circle cx="10" cy="16" r="8.500" stroke="#5a5a5a" strokeWidth="3" /><path d="M14 8 A13 11 0 1 1 36 21 Q34 25 28 25 H10" stroke="#5a5a5a" strokeWidth="3" /><circle cx="10" cy="16" r="2.500" fill="#5a5a5a" /><circle cx="32" cy="13" r="3.500" stroke="#5a5a5a" strokeWidth="2.500" /><path d="M14 31 H32 V46 H14 V38 H8 M7 33 V43 M47 32 V46 L37 39Z" stroke="#5a5a5a" strokeWidth="3" /></Ico>],
  ["Orthographic", <Ico s={48} vb="0 0 48 48" key="o"><path d="M1.500 1.500 H46.500 V46.500 H1.500Z M16.500 1 V47 M31.500 1 V47 M1 16.500 H47 M1 31.500 H47" stroke="#5a5a5a" strokeWidth="3" /></Ico>],
];

function RulerLabel({ children, className }) {
  return (
    <span className={"absolute flex h-[57px] w-[274px] items-center justify-center bg-[#dcdedd]/90 pt-1 font-['DejaVu_Sans_Mono',monospace] text-[42px] leading-none whitespace-pre text-black " + className}>
      {children}
    </span>
  );
}

function Viewport() {
  const outline = "[text-shadow:0_0_2px_#333,0_0_3px_#333]";
  return (
    <section aria-label="3D Viewport" className="relative min-h-0 flex-1 overflow-hidden rounded-[12px] border-2 border-[#9a9c9d] bg-[#a2a4a5]">
      <div className="absolute -inset-0.5">
        <SceneDrawing />
        <RulerLabel className="top-[504px] left-[1625px]">0.230312 m</RulerLabel>
        <RulerLabel className="top-[762px] left-[2380px]">0.088754 m</RulerLabel>
      </div>
      <div className="absolute -inset-0.5 flex flex-col">
        <ViewportHeader />
        <div className="flex justify-between pt-[18px] pr-[21px] pl-[18px]">
          <div className="flex gap-[53px] pt-[93px]">
            <div className="flex flex-col gap-[15px]">
              <ToolGroup items={[["select", "Select Box", true], ["cursor", "Cursor"]]} />
              <ToolGroup items={[["move", "Move"], ["rotate", "Rotate"], ["scale", "Scale", true], ["transform", "Transform"]]} />
              <ToolGroup items={[["annotate", "Annotate", true], ["measure", "Measure", false, true]]} />
              <ToolGroup items={[["cube", "Add Cube", true]]} />
            </div>
            <div className={"-mt-1 leading-[53px] text-white tabular-nums " + outline}>
              <p>Back Orthographic</p>
              <p>(1) Collection | base.dae</p>
              <p>Centimeters</p>
            </div>
          </div>
          <div className="flex flex-col items-end">
            <button className={"flex h-[60px] w-[188px] items-center justify-between rounded-[10px] bg-[#3c3c3c] pr-2.5 pl-6 text-[#e0e0e0] " + shadow}>
              Options <Chevron />
            </button>
            <div className="mt-[34px] mr-1"><NavGizmo /></div>
            <div className="-mt-0.5 mr-[3px] flex flex-col gap-1.5">
              {navButtons.map(([l, icon]) => (
                <button key={l} aria-label={l} className="flex size-[84px] items-center justify-center rounded-full bg-[#bbbdbc]">{icon}</button>
              ))}
            </div>
          </div>
        </div>
      </div>
      <button aria-label="Show sidebar" className="absolute top-[195px] -right-0.5 flex h-[42px] w-6 items-center justify-center rounded-l-[4px] bg-[#858786]">
        <Ico w={12} h={24} vb="0 0 12 24"><path d="M10 2 L2 12 L10 22" stroke="#b4b6b6" strokeWidth="2.500" /></Ico>
      </button>
    </section>
  );
}

/* ---------- timeline ---------- */

const transport = [
  ["Jump to start", <path key="a" d="M15 15 H20 V45 H15Z M43 18 V42 L22 30Z" fill="#000" />],
  ["Previous keyframe", <path key="b" d="M4 30 L18 15 L32 30 L18 45Z M50 18 V42 L34 30Z" fill="#000" />],
  ["Play reversed", <path key="c" d="M44 12 V48 L14 30Z" fill="#000" />],
  ["Play", <path key="d" d="M14 12 V48 L45 30Z" fill="#000" />],
  ["Next keyframe", <path key="e" d="M6 18 V42 L22 30Z M24 30 L38 15 L52 30 L38 45Z" fill="#000" />],
  ["Jump to end", <path key="f" d="M17 18 V42 L38 30Z M40 15 H45 V45 H40Z" fill="#000" />],
];

function Timeline() {
  const number = "bg-transparent text-right text-[33px] tabular-nums outline-none";
  return (
    <section aria-label="Timeline" className="flex h-[74px] shrink-0 items-center rounded-[12px] border-2 border-[#a4a4a4] bg-[#adadad] pr-5 pl-4 text-[#1a1a1a]">
      <IconDrop icon={<ClockIcon />} label="Timeline editor type" />
      <div className={"ml-[14px] flex h-[60px] rounded-[10px] bg-[#3c3c3c] text-[#e0e0e0] " + shadow}>
        <button className="flex w-[206px] items-center justify-between border-r-2 border-[#343434] pr-2 pl-6">Playback <Chevron /></button>
        <button className="flex w-[177px] items-center justify-between pr-2.5 pl-[22px]">Keying <Chevron /></button>
      </div>
      <button className="ml-[29px]">View</button>
      <button className="ml-[45px]">Marker</button>
      <div className={"ml-auto flex h-[60px] w-[120px] overflow-hidden rounded-[10px] bg-[#757575] " + shadow}>
        <button aria-label="Auto keying" className="flex w-[60px] items-center justify-center rounded-l-[10px] border-[3px] border-[#4a4a4a] bg-[#dcdcdc]">
          <Ico s={30} vb="0 0 30 30"><circle cx="15" cy="15" r="13.500" stroke="#5a5a5a" strokeWidth="3" /></Ico>
        </button>
        <button aria-label="Auto keying options" disabled className="flex flex-1 items-center justify-center"><Chevron color="#5c5c5c" /></button>
      </div>
      <div className={"ml-4 flex h-[60px] divide-x-[3px] divide-[#4a4a4a] overflow-hidden rounded-[10px] border-[3px] border-[#4a4a4a] bg-[#dcdcdc] " + shadow}>
        {transport.map(([l, d]) => (
          <button key={l} aria-label={l} className="flex w-[59px] items-center justify-center"><Ico s={60} vb="0 0 60 60">{d}</Ico></button>
        ))}
      </div>
      <input aria-label="Current frame" defaultValue="1" className={"ml-[482px] h-[60px] w-56 rounded-[10px] border-[3px] border-[#4a4a4a] bg-[#d5d5d5] text-center text-[33px] tabular-nums outline-none " + shadow} />
      <div className={"ml-4 flex h-[60px] overflow-hidden rounded-[10px] border-[3px] border-[#4a4a4a] bg-[#d5d5d5] " + shadow}>
        <button aria-label="Use preview range" className="flex w-[57px] items-center justify-center border-r-[3px] border-[#4a4a4a] bg-[#dcdcdc]"><Stopwatch /></button>
        <label className="flex w-[262px] items-center justify-between border-r-[3px] border-[#4a4a4a] pr-9 pl-[46px]">
          Start <input defaultValue="1" className={"w-20 " + number} />
        </label>
        <label className="flex w-[251px] items-center justify-between pr-9 pl-[45px]">
          End <input defaultValue="250" className={"w-20 " + number} />
        </label>
      </div>
    </section>
  );
}

/* ---------- outliner ---------- */

function Toggles({ check }) {
  return (
    <span className="ml-auto flex shrink-0 items-center gap-5 pr-[38px]">
      {check && (
        <label className="mr-[5px] grid size-[30px] place-items-center rounded-[4px] bg-[#1a1a1a]">
          <input type="checkbox" defaultChecked aria-label="Exclude from view layer" className="col-start-1 row-start-1 size-[30px] appearance-none" />
          <Ico s={24} vb="0 0 24 24" className="pointer-events-none col-start-1 row-start-1"><path d="M3 13 L9 20 L21 3" stroke="#9f9f9f" strokeWidth="4.500" /></Ico>
        </label>
      )}
      <button aria-label="Hide in viewport"><Eye /></button>
      <button aria-label="Disable in renders"><Cam /></button>
    </span>
  );
}

function ObjRow({ icon, name, data, selected, className }) {
  return (
    <li className={"flex h-[60px] items-center pl-[140px] " + className}>
      <button aria-label={"Expand " + name}><Right color="#000" w={3} /></button>
      <span className={"ml-[21px] flex h-[54px] w-[60px] items-center justify-center " + (selected ? "rounded-[12px] border-[3px] border-[#596071] bg-[#6b7488]" : "")}>{icon}</span>
      <span className={"ml-3 flex-1 pt-1.5 " + (selected ? "text-white" : "text-black")}>{name}</span>
      <span className="flex h-[60px] w-9 items-center overflow-hidden">{data}</span>
      <span className="flex w-[209px]"><Toggles /></span>
    </li>
  );
}

function Outliner() {
  return (
    <section aria-label="Outliner" className="flex h-[596px] shrink-0 flex-col overflow-hidden rounded-[12px] border-2 border-[#a8a8a8] bg-[#999999]">
      <div className="flex h-[75px] shrink-0 items-start bg-[#b3b3b3] pt-[5px] pr-[22px] pl-5">
        <IconDrop icon={<Tree />} label="Outliner editor type" />
        <IconDrop icon={<Layers />} label="Display mode" className="ml-[15px]" />
        <SearchBox label="Search outliner" className="ml-12 min-w-0 flex-1" />
      </div>
      <div className="relative -mx-0.5 flex-1">
        <ul>
          <li className="flex h-[60px] items-center pl-[66px] text-black">
            <Box /><span className="ml-[21px] pt-1.5">Scene Collection</span>
          </li>
          <li className="flex h-[60px] items-center bg-[#9f9f9f] pl-[74px] text-white">
            <button aria-label="Collapse Collection">
              <Ico w={28} h={17} vb="0 0 28 17"><path d="M2 2 L14 14 L26 2" stroke="#000" strokeWidth="3" /></Ico>
            </button>
            <span className="ml-4 flex h-[54px] w-[60px] items-center justify-center rounded-[12px] border-[3px] border-[#5a5a5a] bg-[#767676]"><Box /></span>
            <span className="ml-3 pt-1.5">Collection</span>
            <Toggles check />
          </li>
          <ObjRow icon={<MeshTri />} name="base.dae" selected className="bg-[#919cb7]" />
          <ObjRow icon={<CameraObj />} name="Camera" className="bg-[#9f9f9f]" data={<Ico w={36} h={44} vb="0 0 36 44"><path d="M36 1 Q34 4 34 12 V32 Q34 40 36 43" stroke="#666" strokeWidth="2" /></Ico>} />
          <ObjRow icon={<MeshTri />} name="Cube" className="" data={<span className="ml-[5px]"><MeshData /></span>} />
          <ObjRow icon={<LightObj />} name="Light" className="bg-[#9f9f9f]" data={<LightData />} />
        </ul>
        <div className="mt-[60px] h-[60px] bg-[#9f9f9f] pt-3 pl-[89px] font-['DejaVu_Sans',sans-serif] leading-[18px] text-[#bdbdbd]">
          <p className="text-[14px]">© 2025 Alireza Sharifan. All rights reserved.</p>
          <p className="text-[15px] font-bold text-[#c8c8c8]">https://github.com/Alireza-Sharifan/quadruped-sim-suite</p>
        </div>
        <div className="absolute top-[136px] left-[85px] h-[210px] w-[3px] bg-[#5c5c5c]" />
        <div className="absolute bottom-[5px] left-6 h-[9px] w-[526px] rounded-full bg-[#808080]" />
      </div>
    </section>
  );
}

/* ---------- properties ---------- */

const tabs = [
  ["Render", <TabRender key="1" />],
  ["Output", <TabOutput key="2" />],
  ["View Layer", <Layers key="3" c="#c8c8c8" d="#999" bg="#6a6a6a" />],
  ["Scene", <SceneIcon key="4" c="#c8c8c8" bg="#6a6a6a" line="#333" />],
  ["World", <TabWorld key="5" />],
  ["Collection", <TabCollection key="6" />, true],
  ["Object", <ObjectMode key="7" c="#c08a5c" f="#f0a05c" line="#333" />, true],
  ["Modifiers", <TabModifier key="8" />],
  ["Particles", <TabParticles key="9" />],
  ["Physics", <TabPhysics key="10" />],
  ["Constraints", <TabConstraint key="11" />],
  ["Data", <MeshData key="12" />],
  ["Material", <TabMaterial key="13" />],
];

const Dot = () => <span className="block size-3 rounded-full bg-[#1a1a1a]" />;

function ScaleRow({ label, value, className, rowClass }) {
  return (
    <div className={"flex items-center " + rowClass}>
      <label htmlFor={"scale-" + label} className="w-[171px] text-right text-black">{label}</label>
      <input id={"scale-" + label} defaultValue={value} className={"ml-[27px] h-full w-[166px] border-[#4a4a4a] bg-[#d6d6d6] text-center text-[33px] text-[#1a1a1a] tabular-nums outline-none " + className} />
      <button aria-label="Lock" className="ml-1.5 pb-1"><Lock /></button>
      <span className="ml-[34px]"><Dot /></span>
    </div>
  );
}

const panels = ["Relations", "Collections", "Instancing", "Motion Paths", "Shading", "Visibility", "Viewport Display", "Line Art", "Animation", "Custom Properties"];

function Properties() {
  return (
    <section aria-label="Properties" className="flex min-h-0 flex-1 flex-col overflow-hidden rounded-[12px] bg-[#b3b3b3]">
      <div className="flex h-[76px] shrink-0 items-start justify-between border-t-2 border-[#a8a8a8] pt-[5px] pr-[7px] pl-[22px]">
        <IconDrop icon={<PropsIcon />} label="Properties editor type" />
        <SearchBox label="Search properties" className="ml-5 w-[336px]" />
        <button aria-label="Options" className={"flex size-[60px] items-center justify-center rounded-[10px] bg-[#3c3c3c] " + shadow}><Chevron /></button>
      </div>
      <div className="flex min-h-0 flex-1">
        <div role="tablist" className="w-[85px] shrink-0 bg-[#1d1d1d] pt-[25px] pl-1">
          {tabs.map(([l, icon, gap], i) => (
            <button
              key={l}
              role="tab"
              aria-label={l}
              aria-selected={i === 6}
              className={
                "flex h-[84px] w-full items-center justify-center rounded-l-[12px] border-y-[3px] border-l-[3px] border-[#343434] pr-1 " +
                (i === 6 ? "bg-[#b3b3b3] " : "bg-[#6a6a6a] ") +
                (gap ? "mt-[25px]" : "")
              }
            >
              {icon}
            </button>
          ))}
        </div>
        <div className="flex min-w-0 flex-1 flex-col gap-1.5 overflow-hidden pl-6">
          <div className="h-[375px] w-[508px] shrink-0 rounded-b-[12px] bg-[#cccccc]">
            <div className={"ml-[198px] h-1.5 w-[166px] rounded-bl-[8px] border-b-[3px] border-l-[3px] border-[#4a4a4a] bg-[#d6d6d6] " + shadow} />
            <div className="mt-[15px] flex items-center">
              <span className="w-[171px] text-right text-black">Mode</span>
              <DropSelect label="Rotation mode" value="XYZ ..." className="ml-[27px] w-[166px]" textClass="pl-6" />
              <span className="ml-[84px]"><Dot /></span>
            </div>
            <div className="mt-[15px]">
              <ScaleRow label="Scale X" value="1.046" rowClass="h-[58px]" className="rounded-tl-[10px] border-x-[3px] border-t-[3px]" />
              <ScaleRow label="Y" value="1.000" rowClass="h-[59px]" className="border-x-[3px] border-t-[3px]" />
              <ScaleRow label="Z" value="1.000" rowClass="h-[62px]" className="rounded-bl-[10px] border-[3px]" />
            </div>
            <button className="mt-[43px] ml-[74px] flex items-center gap-[17px] text-[#1a1a1a]"><Right />Delta Transform</button>
          </div>
          {panels.map((p) => (
            <button key={p} className="flex h-[75px] w-[508px] shrink-0 items-center rounded-[12px] bg-[#cccccc] pr-[22px] pl-[31px] text-[33px] text-[#1a1a1a]">
              <Right /><span className="ml-[18px]">{p}</span><span className="ml-auto"><Grip /></span>
            </button>
          ))}
        </div>
        <div className="w-[21px] shrink-0 pt-[428px] pl-[6px]">
          <div className="h-[724px] w-[9px] rounded-full bg-[#8e8e8e]" />
        </div>
      </div>
    </section>
  );
}

function StatusBar() {
  return (
    <footer className="mt-[9px] flex h-[61px] shrink-0 items-center justify-end bg-[#b3b3b3] pr-9 pb-1 text-[33px] text-[#1a1a1a] tabular-nums">
      <button aria-label="Online access disabled">
        <Ico>
          <path d="M10 4 A19.500 19.500 0 0 1 37 32 M10 13 H38 M16 2 C14 6 13 9 13 12 M26 2 C31 12 31 20 29 26 M21 2 V10" stroke="#1c1c1c" strokeWidth="3" />
          <path d="M3 14 A19.500 19.500 0 0 0 30 39 M3 28 H26 M13 18 C12 28 14 34 18 40 M26 32 L22 39" stroke="#777" strokeWidth="3" />
          <path d="M1 1 L41 41" stroke="#1c1c1c" strokeWidth="4" />
        </Ico>
      </button>
      <span className="mr-3 ml-6 h-[42px] w-[3px] bg-[#1c1c1c]" />
      4.4.0
    </footer>
  );
}

export default function App() {
  return (
    <div className="flex h-screen flex-col overflow-hidden bg-[#161616] font-['Inter',sans-serif] text-[31px] leading-[40px] [font-feature-settings:'cv08']">
      <TitleBar />
      <TopBar />
      <main className="mt-[9px] flex min-h-0 flex-1 gap-[10px] pr-[3px]">
        <div className="flex min-w-0 flex-1 flex-col gap-[9px]">
          <Viewport />
          <Timeline />
        </div>
        <div className="flex w-[638px] shrink-0 flex-col gap-[9px]">
          <Outliner />
          <Properties />
        </div>
      </main>
      <StatusBar />
    </div>
  );
}
